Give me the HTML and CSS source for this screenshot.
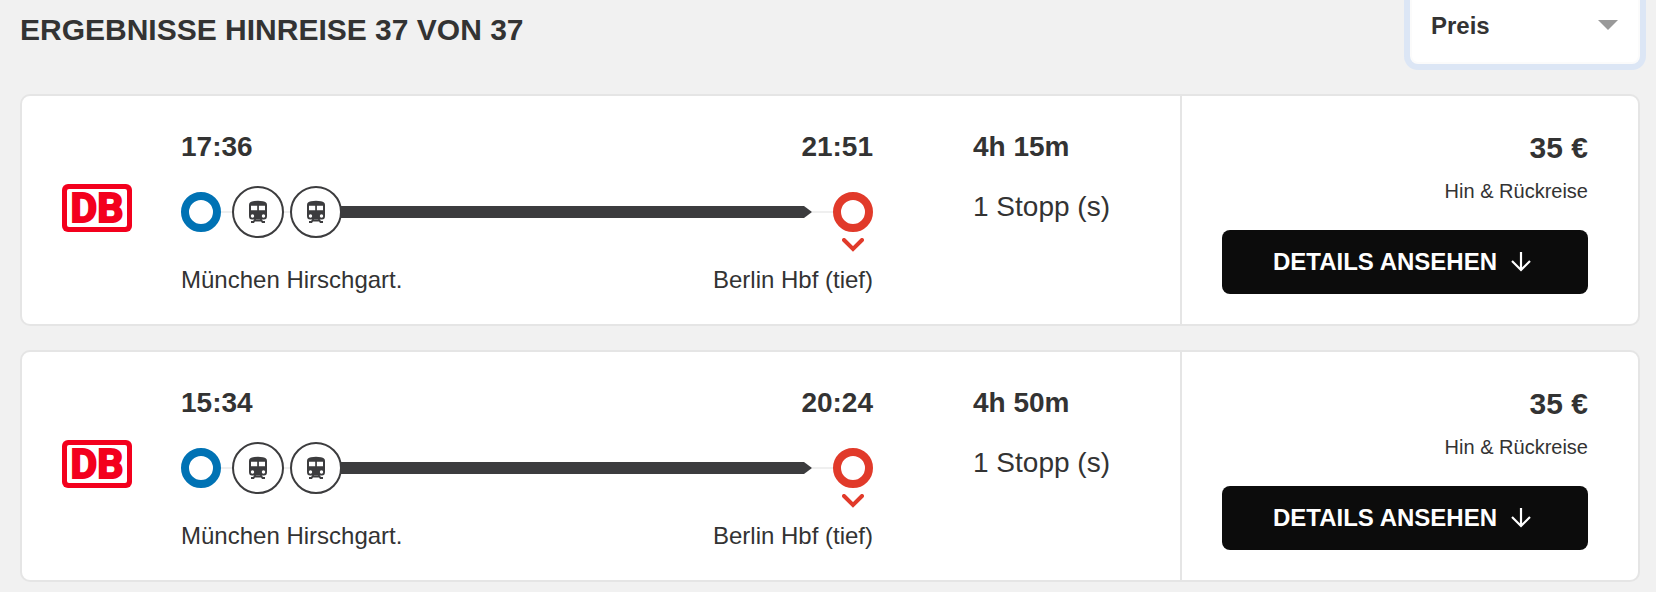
FILE: index.html
```
<!DOCTYPE html>
<html lang="de">
<head>
  <meta charset="UTF-8" />
  <meta name="viewport" content="width=device-width, initial-scale=1.0"/>
  <title>Ergebnisse Hinreise</title>
  <link rel="stylesheet" href="styles.css">
</head>
<body>

  <!-- shared icons -->
  <svg class="sprite" aria-hidden="true">
    <symbol id="logo-db" viewBox="0 0 70 48">
      <rect x="0" y="0" width="70" height="48" rx="6" fill="#f3001d"/>
      <rect x="5" y="5" width="60" height="38" rx="2" fill="#fff"/>
      <text x="35" y="38" text-anchor="middle" class="logo-text">DB</text>
    </symbol>
    <symbol id="icon-train" viewBox="0 0 20 24">
      <path fill="#3c3c3e" fill-rule="evenodd" d="M5 1.300Q10 0 15 1.300Q19 2 19 5V16Q19 19.500 16 19.500H4Q1 19.500 1 16V5Q1 2 5 1.300ZM3 5.700V10.200H9.200V5.700ZM10.900 5.700V10.200H17V5.700ZM4.500 14.300A1.700 1.700 0 1 0 4.500 17.700A1.700 1.700 0 1 0 4.500 14.300ZM15.500 14.300A1.700 1.700 0 1 0 15.500 17.700A1.700 1.700 0 1 0 15.500 14.300Z"/>
      <path fill="none" stroke="#3c3c3e" stroke-width="1.800" d="M7.500 19L5.500 22H3M12.500 19L14.500 22H17M6 20.500H14"/>
    </symbol>
    <symbol id="icon-chevron" viewBox="0 0 22 14">
      <path d="M2 2L11 11L20 2" fill="none" stroke="#e13a2a" stroke-width="4" stroke-linecap="round"/>
    </symbol>
    <symbol id="icon-arrow" viewBox="0 0 20 20">
      <path d="M10 0V18M1 9L10 18L19 9" fill="none" stroke="#fff" stroke-width="2.200"/>
    </symbol>
  </svg>

  <header class="results-header">
    <h1>Ergebnisse Hinreise 37 von 37</h1>
    <div class="sort">
      <select aria-label="Sortieren nach">
        <option>Preis</option>
      </select>
    </div>
  </header>

  <main class="results">
    <article class="card">
      <div class="connection">
        <svg class="logo" role="img" aria-label="DB"><use href="#logo-db"/></svg>
        <div class="journey">
          <div class="times"><span>17:36</span><span>21:51</span></div>
          <div class="track">
            <span class="ring start"></span>
            <span class="line"></span>
            <span class="train"><svg><use href="#icon-train"/></svg></span>
            <span class="line short"></span>
            <span class="train"><svg><use href="#icon-train"/></svg></span>
            <span class="bar"></span>
            <span class="line long"></span>
            <span class="ring end"><svg><use href="#icon-chevron"/></svg></span>
          </div>
          <div class="stations"><span>München Hirschgart.</span><span>Berlin Hbf (tief)</span></div>
        </div>
        <div class="duration">
          <strong>4h 15m</strong>
          <span>1 Stopp (s)</span>
        </div>
      </div>
      <div class="offer">
        <strong class="price">35 €</strong>
        <span class="fare">Hin &amp; Rückreise</span>
        <button class="details-btn" type="button">Details ansehen <svg><use href="#icon-arrow"/></svg></button>
      </div>
    </article>

    <article class="card">
      <div class="connection">
        <svg class="logo" role="img" aria-label="DB"><use href="#logo-db"/></svg>
        <div class="journey">
          <div class="times"><span>15:34</span><span>20:24</span></div>
          <div class="track">
            <span class="ring start"></span>
            <span class="line"></span>
            <span class="train"><svg><use href="#icon-train"/></svg></span>
            <span class="line short"></span>
            <span class="train"><svg><use href="#icon-train"/></svg></span>
            <span class="bar"></span>
            <span class="line long"></span>
            <span class="ring end"><svg><use href="#icon-chevron"/></svg></span>
          </div>
          <div class="stations"><span>München Hirschgart.</span><span>Berlin Hbf (tief)</span></div>
        </div>
        <div class="duration">
          <strong>4h 50m</strong>
          <span>1 Stopp (s)</span>
        </div>
      </div>
      <div class="offer">
        <strong class="price">35 €</strong>
        <span class="fare">Hin &amp; Rückreise</span>
        <button class="details-btn" type="button">Details ansehen <svg><use href="#icon-arrow"/></svg></button>
      </div>
    </article>
  </main>

</body>
</html>
```
FILE: styles.css
```
:root {
  --bg: #f1f1f1;
  --text: #333;
  --border: #e5e5e5;
  --dark: #3c3c3e;
  --blue: #0072b4;
  --red: #e13a2a;
  --focus: #dce6f5;
}

* {
  box-sizing: border-box;
}

body {
  margin: 0;
  padding: 0 16px 10px 20px;
  background: var(--bg);
  color: var(--text);
  font-family: "Liberation Sans", Arial, sans-serif;
  font-size: 24px;
  line-height: 28px;
}

.sprite {
  display: none;
}

.results-header {
  display: flex;
  justify-content: space-between;
  align-items: flex-start;
}

h1 {
  margin: 12px 0 0;
  font-size: 30px;
  line-height: 36px;
  text-transform: uppercase;
}

/* the sort box is pulled up under the top edge */
.sort {
  position: relative;
  width: 230px;
  margin-top: -14px;
}

.sort select {
  display: block;
  width: 100%;
  height: 78px;
  padding: 0 50px 0 19px;
  appearance: none;
  border: 2px solid #fbfbfb;
  border-radius: 8px;
  background: #fff;
  box-shadow: 0 0 0 6px var(--focus);
  color: var(--text);
  font: bold 24px "Liberation Sans", Arial, sans-serif;
}

.sort::after {
  content: '';
  position: absolute;
  top: 34px;
  right: 22px;
  border: 10px solid transparent;
  border-top-color: #999;
  border-bottom: none;
  pointer-events: none;
}

.results {
  display: flex;
  flex-direction: column;
  gap: 24px;
  margin-top: 30px;
}

.card {
  display: flex;
  border: 2px solid var(--border);
  border-radius: 10px;
  background: #fff;
}

.connection {
  flex: 1;
  display: flex;
  padding: 34px 0 30px 40px;
}

.logo {
  width: 70px;
  height: 48px;
  margin: 54px 49px 0 0;
}

.logo-text {
  font-family: Roboto, sans-serif;
  font-size: 41px;
  font-weight: bold;
  fill: #f3001d;
  stroke: #f3001d;
  stroke-width: 2px;
}

.journey {
  flex: 1;
}

.times,
.stations {
  display: flex;
  justify-content: space-between;
}

.times,
.duration {
  font-size: 28px;
  line-height: 34px;
}

.times {
  font-weight: bold;
}

.track {
  display: flex;
  align-items: center;
  margin: 22px 0 28px;
}

.ring {
  position: relative;
  width: 40px;
  height: 40px;
  border: 8px solid;
  border-radius: 50%;
}

.ring.start {
  border-color: var(--blue);
}

.ring.end {
  border-color: var(--red);
}

.ring svg {
  position: absolute;
  top: 38px;
  left: 1px;
  width: 22px;
  height: 14px;
}

.line {
  width: 11px;
  height: 2px;
  background: #efefef;
}

.line.short {
  width: 6px;
}

.line.long {
  width: 21px;
}

.train {
  display: flex;
  align-items: center;
  justify-content: center;
  width: 52px;
  height: 52px;
  border: 2px solid var(--dark);
  border-radius: 50%;
}

.train svg {
  width: 20px;
  height: 24px;
}

.bar {
  flex: 1;
  height: 12px;
  margin-left: -1px;
  background: var(--dark);
  clip-path: polygon(0 0, calc(100% - 8px) 0, 100% 50%, calc(100% - 8px) 100%, 0 100%);
}

.duration {
  display: flex;
  flex-direction: column;
  gap: 26px;
  width: 307px;
  padding-left: 100px;
}

.offer {
  display: flex;
  flex-direction: column;
  width: 458px;
  padding: 34px 50px 30px 40px;
  border-left: 2px solid var(--border);
  text-align: right;
}

.price {
  font-size: 30px;
  line-height: 36px;
}

.fare {
  margin: 13px 0 27px;
  font-size: 20px;
  line-height: 24px;
}

.details-btn {
  display: flex;
  align-items: center;
  justify-content: center;
  gap: 14px;
  height: 64px;
  padding: 0 12px 0 6px;
  border: none;
  border-radius: 8px;
  background: #0c0c0c;
  color: #fff;
  font: bold 24px "Liberation Sans", Arial, sans-serif;
  text-transform: uppercase;
  cursor: pointer;
}

.details-btn svg {
  width: 20px;
  height: 20px;
}
```
